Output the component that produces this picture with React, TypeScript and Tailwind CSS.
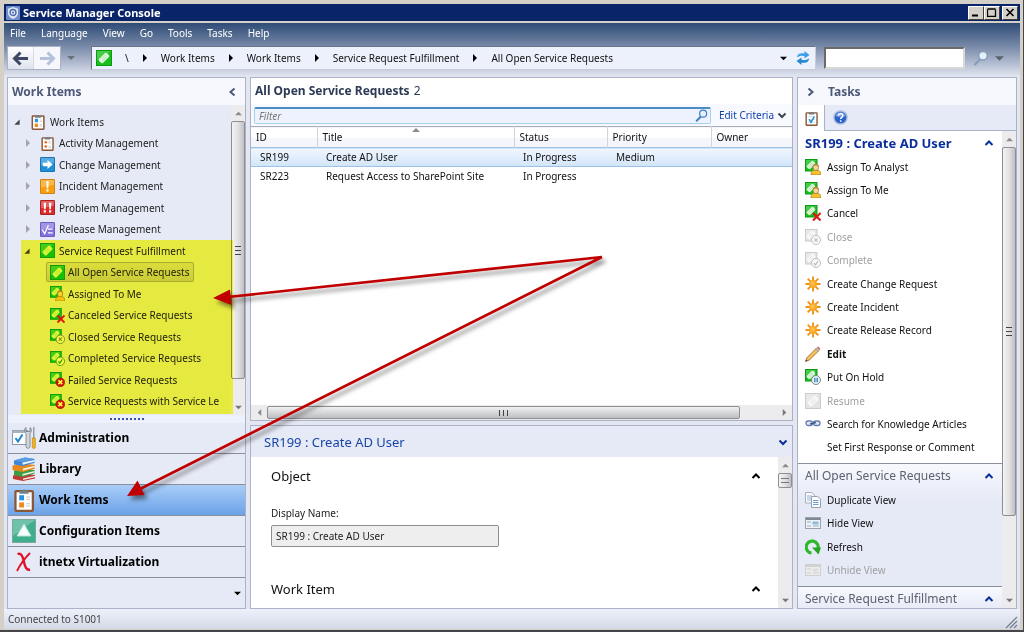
import type { ReactNode } from "react";

type Badge = "user" | "x" | "closed" | "check" | "fail" | "pause";

function RequestIcon({ badge, muted, size = 16 }: { badge?: Badge; muted?: boolean; size?: number }) {
  const fill = muted ? "#e4e4e4" : "#18c01c";
  const edge = muted ? "#cccccc" : "#0d9a12";
  const ring = muted ? "#bdbdbd" : badge === "check" ? "#4f9a44" : "#7b8a80";
  const s = badge ? 11.5 : 15;
  return (
    <svg width={size} height={size} viewBox="0 0 16 16" className="shrink-0" aria-hidden="true">
      <rect x="0.5" y="0.5" width={s} height={s} fill={fill} stroke={edge} />
      <path d={badge ? "M1 1h11L1 9z" : "M1 1h14L1 11z"} fill="#fff" opacity="0.2" />
      <g transform={badge ? "translate(6 6) rotate(-45) scale(.8)" : "translate(8 8) rotate(-45)"}>
        <rect x="-5.5" y="-2.800" width="11" height="5.600" rx="1.600" fill={muted ? "#fafafa" : "#dff7dc"} />
        <path d="M-3-1h6M-3 1h6" stroke={muted ? "#d5d5d5" : "#9fdc9b"} strokeWidth="0.8" />
      </g>
      {badge === "user" && (
        <g>
          <path d="M6 16c0-4 1.500-5 4.700-5s5.200 1 5.200 5z" fill="#f2c230" stroke="#a87a10" strokeWidth="0.7" />
          <ellipse cx="10.800" cy="8.300" rx="2.800" ry="3.300" fill="#f6d6a6" stroke="#a8742a" strokeWidth="0.8" />
          <path d="M7.800 8c0-4.500 6-4.500 6.100 0-2-2-3.500-2-6.100 0z" fill="#b98a34" />
        </g>
      )}
      {badge === "x" && <path d="M8 8l7.500 7.500M15.500 8L8 15.500" stroke="#e01414" strokeWidth="2" />}
      {(badge === "closed" || badge === "check" || badge === "pause") && (
        <circle cx="11" cy="11" r="4.500" fill={badge === "pause" ? "#e6f3fb" : "#fbfbfb"} stroke={ring} />
      )}
      {badge === "closed" && <path d="M9.300 9.300l3.400 3.400M12.700 9.300l-3.400 3.400" stroke={ring} strokeWidth="1.200" />}
      {badge === "check" && <path d="M9 11l1.500 2 2.500-4" stroke={muted ? "#bdbdbd" : "#2a9a2a"} strokeWidth="1.300" fill="none" />}
      {badge === "pause" && <path d="M9.800 8.800v4.400M12.200 8.800v4.400" stroke="#3a86b8" strokeWidth="1.400" />}
      {badge === "fail" && (
        <g>
          <circle cx="11" cy="11" r="4.700" fill="#d8141c" stroke="#9a0c10" strokeWidth="0.6" />
          <path d="M9 9l4 4M13 9l-4 4" stroke="#fff" strokeWidth="1.700" />
        </g>
      )}
    </svg>
  );
}

function ClipboardIcon({ kind = "both", size = 16 }: { kind?: "both" | "orange" | "check"; size?: number }) {
  return (
    <svg width={size} height={size} viewBox="0 0 16 16" className="shrink-0" aria-hidden="true">
      <rect x="2.300" y="2" width="11.600" height="13.200" rx="0.6" fill="#fff" stroke="#8a5634" strokeWidth="1.500" />
      <path d="M5 3.800V1.900h1.800a1.300 1.300 0 0 1 2.500 0H11v1.900z" fill="#757d86" />
      {kind === "both" && (
        <g>
          <rect x="4.800" y="4.800" width="3.200" height="3.400" fill="#2a8fe0" />
          <rect x="4.800" y="9.600" width="3.200" height="3.400" fill="#f08a1c" />
          <path d="M9.500 6h2.500M9.500 7.500h2.500M9.500 10.500h2.500M9.500 12h2.500" stroke="#c4cad2" strokeWidth="0.8" />
        </g>
      )}
      {kind === "orange" && (
        <g>
          <circle cx="6.200" cy="6.600" r="1.400" fill="#ec6a20" />
          <circle cx="6.200" cy="11.200" r="1.400" fill="#ec6a20" />
          <path d="M8.800 6h3M8.800 7.500h3M8.800 11h3M8.800 12.500h3" stroke="#c4cad2" strokeWidth="0.8" />
        </g>
      )}
      {kind === "check" && (
        <g>
          <path d="M4.500 6h7M4.500 9h7M4.500 12h7" stroke="#bcd0e0" strokeWidth="0.8" />
          <path d="M5.500 9l2 3L11 6" stroke="#1f8fd8" strokeWidth="1.600" fill="none" />
        </g>
      )}
    </svg>
  );
}

function TileIcon({ kind }: { kind: "change" | "incident" | "problem" | "release" }) {
  const colors = { change: "#1f8fd6", incident: "#f6a010", problem: "#dc2a2a", release: "#8472dc" };
  const edges = { change: "#0f6cb0", incident: "#cf7c08", problem: "#a81616", release: "#6654c0" };
  return (
    <svg width="15" height="15" viewBox="0 0 16 16" className="shrink-0" aria-hidden="true">
      <rect x="0.500" y="0.500" width="15" height="15" rx="0.500" fill={colors[kind]} stroke={edges[kind]} />
      <path d="M1 1h14v5L1 9z" fill="#fff" opacity="0.25" />
      {kind === "change" && <path d="M3 6.200h5V3.200L13.500 8 8 12.800V9.800H3z" fill="#fff" />}
      {kind === "incident" && <path d="M6.700 2.500h2.600L8.800 10H7.200zM6.900 11.200h2.200v2.200H6.900z" fill="#fff" />}
      {kind === "problem" && <path d="M3.800 2.800h2.800L6 9.800H4.400zM4 11h2.300v2.200H4zM9.400 2.800h2.800L11.600 9.800H10zM9.600 11h2.300v2.200H9.600z" fill="#fff" />}
      {kind === "release" && <path d="M2.500 8.500l2.500 4L9 3.500M8.500 7.500h5M8.500 11.500h5" stroke="#fff" strokeWidth="1.400" fill="none" />}
    </svg>
  );
}

function Chevron({ dir, color }: { dir: "up" | "down" | "left" | "right"; color: string }) {
  const d = {
    up: "M1.500 7L5 3.500 8.500 7",
    down: "M1.500 3.500L5 7l3.500-3.500",
    left: "M7.500 1.500L3.500 5l4 3.500",
    right: "M2.500 1.500l4 3.500-4 3.500",
  };
  return (
    <svg width="10" height="10" viewBox="0 0 10 10" className="shrink-0" aria-hidden="true">
      <path d={d[dir]} fill="none" stroke={color} strokeWidth="2" />
    </svg>
  );
}

function Triangle({ dir, color, size = 8 }: { dir: "up" | "down" | "left" | "right" | "corner"; color: string; size?: number }) {
  const d = {
    up: "M0 6l4-4 4 4z",
    down: "M0 2h8L4 6z",
    left: "M6 0v8L2 4z",
    right: "M2 0l4 4-4 4z",
    corner: "M7.500 0.500v7h-7z",
  };
  return (
    <svg width={size} height={size} viewBox="0 0 8 8" className="shrink-0" aria-hidden="true">
      <path d={d[dir]} fill={color} />
    </svg>
  );
}

function SunIcon() {
  return (
    <svg width="16" height="16" viewBox="0 0 16 16" aria-hidden="true">
      <path d="M8 0.500v15M0.500 8h15M2.700 2.700l10.600 10.600M13.300 2.700L2.700 13.300" stroke="#f0921a" strokeWidth="1.900" />
      <circle cx="8" cy="8" r="4" fill="#f9a825" />
      <circle cx="7.500" cy="7.500" r="2.200" fill="#fdc04a" />
    </svg>
  );
}

function PencilIcon() {
  return (
    <svg width="16" height="16" viewBox="0 0 16 16" aria-hidden="true">
      <path d="M0.500 15.500l1.500-4L11 2.500l2.500 2.500L4.500 14z" fill="#f3bd62" stroke="#9a6a2a" strokeWidth="0.8" />
      <path d="M10.500 3l1.500-1.500L14.500 4 13 5.500z" fill="#b9bcc0" stroke="#888" strokeWidth="0.500" />
      <path d="M12 1.500L13.300.500 15.500 2.700 14.500 4z" fill="#e26a5a" />
      <path d="M0.500 15.500l.800-2 1.300 1.300z" fill="#333" />
    </svg>
  );
}

function LinkIcon() {
  return (
    <svg width="16" height="16" viewBox="0 0 16 16" aria-hidden="true">
      <rect x="1" y="5" width="6.500" height="4.500" rx="2.200" fill="#e4ebf6" stroke="#6580ac" strokeWidth="1.300" />
      <rect x="8.500" y="5" width="6.500" height="4.500" rx="2.200" fill="#e4ebf6" stroke="#6580ac" strokeWidth="1.300" />
      <path d="M5 8l6-1.500" stroke="#405c8c" strokeWidth="1.400" />
    </svg>
  );
}

function CopyIcon() {
  return (
    <svg width="16" height="16" viewBox="0 0 16 16" aria-hidden="true">
      <path d="M.5.500h6L9.500 3v8h-9z" fill="#fbfcff" stroke="#a8aeb8" />
      <path d="M2 4h5M2 6h5M2 8h5" stroke="#8db4dc" />
      <path d="M6.500 4.500h6L15.500 7v8.500h-9z" fill="#fbfcff" stroke="#9aa1ac" />
      <path d="M8 8.500h5.500M8 10.500h5.500M8 12.500h5.500" stroke="#6ba0d6" />
    </svg>
  );
}

function WindowIcon({ muted }: { muted?: boolean }) {
  return (
    <svg width="16" height="16" viewBox="0 0 16 16" aria-hidden="true">
      <rect x="0.500" y="2.500" width="15" height="11" fill={muted ? "#ececec" : "#eef2f6"} stroke={muted ? "#cfcfcf" : "#9aa2ac"} />
      <path d="M1 4h14" stroke={muted ? "#d2d2d2" : "#7d8894"} strokeWidth="2" />
      <path d="M2 7h4M2 11h4M8 11h6" stroke={muted ? "#d8d8d8" : "#b5c6d4"} strokeWidth="1.500" />
      <rect x="7.500" y="6.500" width="6" height="3" fill={muted ? "#dedede" : "#8fb9d8"} />
    </svg>
  );
}

function RefreshIcon() {
  return (
    <svg width="16" height="16" viewBox="0 0 16 16" aria-hidden="true">
      <path d="M6.500 14A6 6 0 1 1 13 9.500" fill="none" stroke="#2fb82c" strokeWidth="3.200" />
      <path d="M7 8.500h9L13.500 15.500z" fill="#23a520" />
    </svg>
  );
}

function SyncIcon() {
  return (
    <svg width="16" height="16" viewBox="0 0 16 16" aria-hidden="true">
      <path d="M2 7.500C2 4 5.500 2.500 9.500 3.500V1l5 4-5 3.500V6.300C7 5.500 5 5.500 2 7.500z" fill="#3ca0e6" />
      <path d="M14 8.500c0 3.500-3.500 5-7.500 4V15l-5-4 5-3.500v2.200c2.500.8 4.500.8 7.500-1.200z" fill="#2488d0" />
    </svg>
  );
}

function Magnifier({ rim, size = 16 }: { rim: string; size?: number }) {
  return (
    <svg width={size} height={size} viewBox="0 0 16 16" className="shrink-0" aria-hidden="true">
      <path d="M1.500 15L7 9.500" stroke={rim} strokeWidth="2.400" />
      <circle cx="10" cy="5.800" r="4.300" fill="#e2f1fc" stroke={rim} strokeWidth="1.500" />
    </svg>
  );
}

function HelpIcon() {
  return (
    <svg width="15" height="15" viewBox="0 0 16 16" aria-hidden="true">
      <circle cx="8" cy="8" r="7" fill="#2c62d0" stroke="#a9bcdc" strokeWidth="1.500" />
      <path d="M2.500 6.500a5.700 5.700 0 0 1 11 0c-3 1.500-8 1.500-11 0z" fill="#fff" opacity="0.350" />
      <path d="M5.700 6.200c0-3 4.800-3 4.800-.2C10.500 7.800 8.200 7.800 8.200 9.600M8.200 10.800v1.700" stroke="#fff" strokeWidth="1.600" fill="none" />
    </svg>
  );
}

function AppIcon() {
  return (
    <svg width="14" height="14" viewBox="0 0 14 14" aria-hidden="true">
      <rect width="14" height="14" rx="1" fill="#6f8cc8" />
      <path d="M7 1l5 1.800v4C12 10 9.500 12 7 13 4.500 12 2 10 2 6.800v-4z" fill="#dfe8f8" />
      <circle cx="7" cy="6.500" r="3" fill="none" stroke="#4a68ac" strokeWidth="1.300" />
      <circle cx="7" cy="6.500" r="1" fill="#4a68ac" />
    </svg>
  );
}

function AdministrationIcon() {
  return (
    <svg width="24" height="24" viewBox="0 0 24 24" aria-hidden="true">
      <rect x="0.500" y="4.500" width="15" height="14" fill="#fff" stroke="#8b98a6" />
      <rect x="0.500" y="4.500" width="15" height="2.500" fill="#aab4c0" />
      <path d="M3.500 12l2.500 3.500L10.500 8.500" stroke="#1f86cc" strokeWidth="2" fill="none" />
      <path d="M14 1.500c-1.500 1-2 4 0 6V20c0 3 4 3 4 0V7.500c2-2 1.500-5 0-6v4h-4z" fill="#d4d8dc" stroke="#6f767e" strokeWidth="0.800" />
      <path d="M21.800 1v11" stroke="#8c9298" strokeWidth="1.300" />
      <path d="M20.300 12h3v9c0 2-3 2-3 0z" fill="#f3b51c" stroke="#b07c08" strokeWidth="0.600" />
    </svg>
  );
}

function LibraryIcon() {
  return (
    <svg width="24" height="24" viewBox="0 0 24 24" aria-hidden="true">
      <path d="M1 18.500l11-2 11 1.500v3.500L11 24 1 22z" fill="#c03a34" />
      <path d="M11 21.500l12-2.700v1.500L11 23z" fill="#f4e6e4" />
      <path d="M2 13.500l10-2 10.500 1.500v3.500L10.500 20 2 18z" fill="#3c9c44" />
      <path d="M10.500 17l12-3v1.500l-12 3.200z" fill="#ecf4ea" />
      <path d="M0.500 8.500l11-2L23 8v3.500L11 15 .5 13z" fill="#e6891c" />
      <path d="M11 11.500l12-2.800v1.500l-12 3.200z" fill="#f7efe0" />
      <path d="M2 3.500l11-3 9.500 1.500v4L10.500 9 2 7.500z" fill="#3f87d6" />
      <path d="M10.500 5.500l12-2.500v1.700l-12 3z" fill="#eef2f8" />
      <path d="M2 3.500l11-3 9.500 1.500-12 3z" fill="#5b9de4" />
    </svg>
  );
}

function ConfigurationIcon() {
  return (
    <svg width="24" height="24" viewBox="0 0 24 24" aria-hidden="true">
      <rect x="0.500" y="0.500" width="23" height="23" fill="#3fae8c" stroke="#7fa89c" />
      <path d="M1 1h22L1 17z" fill="#fff" opacity="0.250" />
      <path d="M12 5l7 12H5z" fill="#f7fffc" stroke="#b8e2d4" />
    </svg>
  );
}

function VirtualizationIcon() {
  return (
    <svg width="24" height="24" viewBox="0 0 24 24" aria-hidden="true">
      <path d="M5.500 4c4-1.500 5.500 3 6.500 8s2.500 8.500 6 7.500" fill="none" stroke="#e0142c" strokeWidth="2.400" />
      <path d="M18 3C13 8 8.500 14 5 21" fill="none" stroke="#e0142c" strokeWidth="1.800" />
    </svg>
  );
}

function VScroll({ thumb, grip }: { thumb: string; grip?: "lines" | "box" }) {
  return (
    <div className="flex w-[14px] shrink-0 flex-col items-center bg-[#ececee]" aria-hidden="true">
      <div className="flex h-4 items-center"><Triangle dir="up" color="#8a8a8a" size={7} /></div>
      <div className="flex min-h-0 w-full flex-1 flex-col">
        <div className={`flex flex-col items-center justify-center gap-px rounded-xs border border-[#8f8f92] bg-linear-to-r from-[#f3f3f3] via-[#e2e2e4] to-[#bfc0c4] ${thumb}`}>
          {grip === "box" ? (
            <><i className="h-px w-2 bg-[#777]" /><i className="h-px w-2" /><i className="h-px w-2 bg-[#777]" /></>
          ) : (
            <><i className="h-px w-1.5 bg-[#444]" /><i className="h-px w-1.5" /><i className="h-px w-1.5 bg-[#444]" /><i className="h-px w-1.5" /><i className="h-px w-1.5 bg-[#444]" /></>
          )}
        </div>
      </div>
      <div className="flex h-4 items-center"><Triangle dir="down" color="#777" size={7} /></div>
    </div>
  );
}

const menus = ["File", "Language", "View", "Go", "Tools", "Tasks", "Help"];
const crumbs = ["Work Items", "Work Items", "Service Request Fulfillment", "All Open Service Requests"];

const tree: { label: string; icon: ReactNode; level: 0 | 1 | 2; open?: boolean; selected?: boolean }[] = [
  { label: "Work Items", icon: <ClipboardIcon />, level: 0, open: true },
  { label: "Activity Management", icon: <ClipboardIcon kind="orange" size={15} />, level: 1 },
  { label: "Change Management", icon: <TileIcon kind="change" />, level: 1 },
  { label: "Incident Management", icon: <TileIcon kind="incident" />, level: 1 },
  { label: "Problem Management", icon: <TileIcon kind="problem" />, level: 1 },
  { label: "Release Management", icon: <TileIcon kind="release" />, level: 1 },
  { label: "Service Request Fulfillment", icon: <RequestIcon size={15} />, level: 1, open: true },
  { label: "All Open Service Requests", icon: <RequestIcon size={15} />, level: 2, selected: true },
  { label: "Assigned To Me", icon: <RequestIcon badge="user" size={15} />, level: 2 },
  { label: "Canceled Service Requests", icon: <RequestIcon badge="x" size={15} />, level: 2 },
  { label: "Closed Service Requests", icon: <RequestIcon badge="closed" size={15} />, level: 2 },
  { label: "Completed Service Requests", icon: <RequestIcon badge="check" size={15} />, level: 2 },
  { label: "Failed Service Requests", icon: <RequestIcon badge="fail" size={15} />, level: 2 },
  { label: "Service Requests with Service Le", icon: <RequestIcon badge="fail" size={15} />, level: 2 },
];
const indent = ["pl-1.5", "pl-4", "pl-[38px]"];

const workspaces: { label: string; icon: ReactNode; active?: boolean }[] = [
  { label: "Administration", icon: <AdministrationIcon /> },
  { label: "Library", icon: <LibraryIcon /> },
  { label: "Work Items", icon: <ClipboardIcon size={24} />, active: true },
  { label: "Configuration Items", icon: <ConfigurationIcon /> },
  { label: "itnetx Virtualization", icon: <VirtualizationIcon /> },
];

type Task = { label: string; icon?: ReactNode; disabled?: boolean; bold?: boolean };
const requestTasks: Task[] = [
  { label: "Assign To Analyst", icon: <RequestIcon badge="user" /> },
  { label: "Assign To Me", icon: <RequestIcon badge="user" /> },
  { label: "Cancel", icon: <RequestIcon badge="x" /> },
  { label: "Close", icon: <RequestIcon badge="closed" muted />, disabled: true },
  { label: "Complete", icon: <RequestIcon badge="check" muted />, disabled: true },
  { label: "Create Change Request", icon: <SunIcon /> },
  { label: "Create Incident", icon: <SunIcon /> },
  { label: "Create Release Record", icon: <SunIcon /> },
  { label: "Edit", icon: <PencilIcon />, bold: true },
  { label: "Put On Hold", icon: <RequestIcon badge="pause" /> },
  { label: "Resume", icon: <RequestIcon muted />, disabled: true },
  { label: "Search for Knowledge Articles", icon: <LinkIcon /> },
  { label: "Set First Response or Comment" },
];
const viewTasks: Task[] = [
  { label: "Duplicate View", icon: <CopyIcon /> },
  { label: "Hide View", icon: <WindowIcon /> },
  { label: "Refresh", icon: <RefreshIcon /> },
  { label: "Unhide View", icon: <WindowIcon muted />, disabled: true },
];

const rows = [
  { id: "SR199", title: "Create AD User", status: "In Progress", priority: "Medium", selected: true },
  { id: "SR223", title: "Request Access to SharePoint Site", status: "In Progress", priority: "" },
];

function TaskList({ items, className }: { items: Task[]; className: string }) {
  return (
    <ul className={`grid auto-rows-fr ${className}`}>
      {items.map((t) => (
        <li key={t.label} className="flex">
          <button
            disabled={t.disabled}
            className={`flex flex-1 items-center gap-1.5 pl-[7px] text-left whitespace-nowrap disabled:text-[#a0a0a0] ${t.bold ? "font-bold" : ""}`}
          >
            <span className="h-4 w-4 shrink-0">{t.icon}</span>
            {t.label}
          </button>
        </li>
      ))}
    </ul>
  );
}

function TaskHeading({ children, primary }: { children: ReactNode; primary?: boolean }) {
  return (
    <h3 className={`flex h-6 items-center justify-between pr-2 pl-[7px] whitespace-nowrap ${primary ? "text-[13px] font-bold text-[#0a2f9c]" : "text-xs text-[#5c626e]"}`}>
      {children}
      <button aria-label="Collapse"><Chevron dir="up" color="#0a2f9c" /></button>
    </h3>
  );
}

function TitleBar() {
  const button = "flex h-3.5 w-4 items-center justify-center border border-t-white border-r-[#404040] border-b-[#404040] border-l-white bg-[#d4d0c8]";
  return (
    <header className="flex h-[17px] shrink-0 items-center gap-[3px] bg-[#0a246a] px-0.5 text-white">
      <AppIcon />
      <h1 className="flex-1 text-[11px] font-bold">Service Manager Console</h1>
      <div className="flex">
        <button className={button} aria-label="Minimize">
          <svg width="10" height="9" viewBox="0 0 10 9"><path d="M1 7.500h6" stroke="#000" strokeWidth="2" /></svg>
        </button>
        <button className={button} aria-label="Maximize">
          <svg width="10" height="9" viewBox="0 0 10 9"><path d="M.5 1.500v7h8v-7M.5 1h8" fill="none" stroke="#000" strokeWidth="1.300" /></svg>
        </button>
        <button className={`ml-0.5 ${button}`} aria-label="Close">
          <svg width="10" height="9" viewBox="0 0 10 9"><path d="M1.500 1l7 7M8.500 1l-7 7" stroke="#000" strokeWidth="1.600" /></svg>
        </button>
      </div>
    </header>
  );
}

function Toolbar() {
  return (
    <div className="flex h-[30px] shrink-0 items-center pr-4 pl-[3px]">
      <div className="flex h-6 border border-[#aab1c2] bg-[#f5f7fd]">
        <button aria-label="Back" className="flex w-[26px] items-center justify-center border-r border-[#d6dae6] bg-linear-to-b from-white to-[#dfe3ee]">
          <svg width="17" height="15" viewBox="0 0 17 15"><path d="M16 7.500H3M8.500 1.500l-6 6 6 6" fill="none" stroke="#3d4964" strokeWidth="3" /></svg>
        </button>
        <button aria-label="Forward" className="flex w-[26px] items-center justify-center">
          <svg width="17" height="15" viewBox="0 0 17 15"><path d="M1 7.500h13M8.500 1.500l6 6-6 6" fill="none" stroke="#b3c2da" strokeWidth="3" /></svg>
        </button>
      </div>
      <button aria-label="History" className="mr-4 ml-1.5"><Triangle dir="down" color="#6a6f7c" /></button>
      <nav aria-label="Location" className="flex h-6 min-w-0 flex-1 items-center border border-t-[#6c7385] border-r-[#c8ccd8] border-b-[#c8ccd8] border-l-[#6c7385] bg-[#edf1fc] px-1 whitespace-nowrap text-[#111]">
        <RequestIcon />
        <span className="ml-[13px]">\</span>
        {crumbs.map((c, i) => (
          <span key={i} className="flex items-center">
            <span className="mx-3"><Triangle dir="right" color="#000" size={8} /></span>
            <a href="#view">{c}</a>
          </span>
        ))}
        <button aria-label="Recent locations" className="mr-2 ml-auto"><Triangle dir="down" color="#000" size={7} /></button>
        <button aria-label="Reload"><SyncIcon /></button>
      </nav>
      <input aria-label="Search" className="ml-2 h-[22px] w-[141px] border-2 border-t-[#6a6a6a] border-r-[#d8d8d4] border-b-[#d8d8d4] border-l-[#6a6a6a] bg-white px-1" />
      <button aria-label="Run search" className="ml-2"><Magnifier rim="#8a9db8" /></button>
      <button aria-label="Search options" className="ml-1.5"><Triangle dir="down" color="#5b616e" size={9} /></button>
    </div>
  );
}

function NavigationPane() {
  return (
    <aside className="flex w-[239px] shrink-0 flex-col border border-[#aab2c8] bg-[#e6eaf6]">
      <div className="flex h-[27px] shrink-0 items-center justify-between bg-[#f7f8fe] pr-2 pl-1 text-[#4d5a77]">
        <h2 className="text-xs font-bold">Work Items</h2>
        <button aria-label="Collapse pane"><Chevron dir="left" color="#4d5a77" /></button>
      </div>
      <div className="flex min-h-0 flex-1">
        <ul className="mt-1.5 grid h-[301px] min-w-0 flex-1 auto-rows-fr text-[#222]">
          {tree.map((n) => (
            <li key={n.label} className={`flex min-w-0 items-center ${indent[n.level]}`}>
              {n.level < 2 && (
                <span className="mr-2 flex w-2 shrink-0"><Triangle dir={n.open ? "corner" : "right"} color={n.open ? "#444" : "#a2a4aa"} size={n.open ? 6 : 8} /></span>
              )}
              <button
                className={`flex items-center whitespace-nowrap ${n.level === 2 ? "h-5 gap-[3px] border px-[3px]" : "gap-1"} ${n.selected ? "rounded-xs border-[#a9acb4] bg-linear-to-b from-[#dcdde2] to-[#c9ccd4]" : "border-transparent"}`}
              >
                {n.icon}
                {n.label}
              </button>
            </li>
          ))}
        </ul>
        <VScroll thumb="h-[258px]" />
      </div>
      <div className="flex h-2 shrink-0 items-center justify-center gap-0.5 bg-[#edf1fc]" aria-hidden="true">
        {Array.from({ length: 9 }, (_, i) => <i key={i} className="h-0.5 w-0.5 bg-[#3a4fa0]" />)}
      </div>
      <nav aria-label="Workspaces">
        {workspaces.map((w) => (
          <button
            key={w.label}
            className={`flex h-[31px] w-full items-center gap-[3px] border-b border-[#8a8f9c] pl-1 text-xs font-bold text-black ${w.active ? "bg-linear-to-b from-[#a9cdf8] to-[#6ba2e8]" : ""}`}
          >
            {w.icon}
            {w.label}
          </button>
        ))}
      </nav>
      <div className="flex h-[30px] shrink-0 items-center justify-end pr-1">
        <button aria-label="Configure buttons"><Triangle dir="down" color="#000" size={7} /></button>
      </div>
    </aside>
  );
}

function ResultsPanel() {
  const th = "relative h-[21px] border-r border-[#d3d4d8] pl-[5px] text-left font-normal";
  return (
    <section className="flex min-h-0 flex-1 flex-col border border-[#aab2c8] bg-white">
      <h2 className="flex h-[26px] shrink-0 items-center gap-1 pl-1 text-xs text-[#2c3a55]"><b>All Open Service Requests</b> 2</h2>
      <div className="flex h-[22px] shrink-0 items-center bg-[#f8f9fe] pr-[5px] pl-[3px]">
        <div className="flex h-[17px] flex-1 items-center rounded-xs border border-t-2 border-[#a6d2ee] border-t-[#4a8cc4] bg-[#eef2fe] pr-0.5">
          <input aria-label="Filter" placeholder="Filter" className="h-full min-w-0 flex-1 bg-transparent px-1 outline-none placeholder:text-[#777] placeholder:italic" />
          <Magnifier rim="#3f7fc0" size={13} />
        </div>
        <button className="ml-2 flex items-center gap-[3px] text-[#0f3fae]">Edit Criteria <Chevron dir="down" color="#3f4654" /></button>
      </div>
      <div className="min-h-0 flex-1 overflow-hidden">
        <table className="w-full table-fixed border-collapse whitespace-nowrap text-[#111]">
          <colgroup>
            <col className="w-[66px]" /><col className="w-[197px]" /><col className="w-[93px]" /><col className="w-[104px]" /><col />
          </colgroup>
          <thead className="border-t border-[#a9acb6] bg-linear-to-b from-white from-50% to-[#f5f6fc] to-50%">
            <tr>
              <th className={th}>ID</th>
              <th className={th}>
                Title
                <span className="absolute inset-x-0 -top-px flex justify-center"><Triangle dir="up" color="#8b8d92" /></span>
              </th>
              <th className={th}>Status</th>
              <th className={th}>Priority</th>
              <th className={`${th} border-r-0`}>Owner</th>
            </tr>
          </thead>
          <tbody>
            {rows.map((r) => (
              <tr key={r.id} className={r.selected ? "border-y border-[#9cc2e6] bg-linear-to-b from-[#f0f6fe] to-[#d3e5fa]" : ""}>
                <td className="h-[19px] pl-[9px]">{r.id}</td>
                <td className="pl-[9px]">{r.title}</td>
                <td className="pl-[9px]">{r.status}</td>
                <td className="pl-[9px]">{r.priority}</td>
                <td />
              </tr>
            ))}
          </tbody>
        </table>
      </div>
      <div className="flex h-[15px] shrink-0 items-center bg-[#ececee]" aria-hidden="true">
        <span className="flex w-4 justify-center"><Triangle dir="left" color="#8a8a8a" size={7} /></span>
        <div className="flex flex-1">
          <div className="flex h-[13px] w-[93%] items-center justify-center gap-px rounded-xs border border-[#8f8f92] bg-linear-to-b from-[#f1f1f2] to-[#bcbec2]">
            <i className="h-1.5 w-px bg-[#444]" /><i className="h-1.5 w-px" /><i className="h-1.5 w-px bg-[#444]" /><i className="h-1.5 w-px" /><i className="h-1.5 w-px bg-[#444]" />
          </div>
        </div>
        <span className="flex w-4 justify-center"><Triangle dir="right" color="#777" size={7} /></span>
      </div>
    </section>
  );
}

function DetailPanel() {
  return (
    <section className="flex h-[184px] shrink-0 flex-col border border-[#aab2c8] bg-white">
      <h2 className="flex h-[31px] shrink-0 items-center justify-between bg-[#e6eaf6] pr-1 pl-[13px] text-[13px] text-[#1846a8]">
        SR199 : Create AD User
        <button aria-label="Toggle details"><Chevron dir="down" color="#0a2f9c" /></button>
      </h2>
      <div className="flex min-h-0 flex-1">
        <div className="flex flex-1 flex-col pt-[9px] pr-[17px] pl-5">
          <h3 className="flex h-5 items-center justify-between text-[13px] text-[#111]">Object <button aria-label="Collapse Object"><Chevron dir="up" color="#000" /></button></h3>
          <label htmlFor="display-name" className="mt-[19px] h-4 leading-4 text-[#222]">Display Name:</label>
          <input id="display-name" readOnly value="SR199 : Create AD User" className="mt-1 h-[22px] w-[228px] rounded-xs border border-[#8e8f94] bg-[#eeeeee] px-1 text-[#222]" />
          <h3 className="mt-8 flex h-5 items-center justify-between text-[13px] text-[#111]">Work Item <button aria-label="Collapse Work Item"><Chevron dir="up" color="#000" /></button></h3>
        </div>
        <VScroll thumb="h-[15px]" grip="box" />
      </div>
    </section>
  );
}

function TasksPane() {
  return (
    <aside className="flex w-[220px] shrink-0 flex-col border border-[#aab2c8] bg-white">
      <div className="flex h-[27px] shrink-0 items-center gap-3 bg-[#f7f8fe] pl-2 text-[#4d5a77]">
        <button aria-label="Collapse pane"><Chevron dir="right" color="#4d5a77" /></button>
        <h2 className="text-xs font-bold">Tasks</h2>
      </div>
      <div className="flex h-[26px] shrink-0 bg-[#e6eaf6]">
        <button aria-label="Tasks" className="flex w-[27px] items-center justify-center border-r border-[#aab2c8] bg-white"><ClipboardIcon kind="check" size={15} /></button>
        <button aria-label="Help" className="flex flex-1 items-center border-b border-[#aab2c8] pl-2"><HelpIcon /></button>
      </div>
      <div className="flex min-h-0 flex-1">
        <div className="min-w-0 flex-1 overflow-hidden text-[#111]">
          <TaskHeading primary>SR199 : Create AD User</TaskHeading>
          <TaskList items={requestTasks} className="h-[304px]" />
          <section className="mt-1 border-t border-[#8a8f9c] bg-linear-to-b from-[#f8f9fe] to-[#e6eaf6] to-30% pb-1">
            <TaskHeading>All Open Service Requests</TaskHeading>
            <TaskList items={viewTasks} className="h-[94px]" />
          </section>
          <section className="border-t border-[#8a8f9c] bg-linear-to-b from-[#f8f9fe] to-[#e6eaf6]">
            <TaskHeading>Service Request Fulfillment</TaskHeading>
          </section>
        </div>
        <VScroll thumb="h-[369px]" />
      </div>
    </aside>
  );
}

function Annotations() {
  return (
    <div className="pointer-events-none absolute inset-0" aria-hidden="true">
      <div className="absolute top-[240px] left-[21px] h-[174px] w-[212px] bg-[#ffff42] mix-blend-multiply" />
      <svg className="absolute top-0 left-0 overflow-visible drop-shadow-[3px_4px_2px_rgba(0,0,0,0.45)]" width="620" height="510" viewBox="0 0 620 510">
        <path d="M602 257L228 297M602 257L138 490" stroke="#c00000" strokeWidth="2.600" fill="none" />
        <path d="M213 298l17-8.500 1.500 15.500zM127 496l10.500-15.500 7 14.500z" fill="#c00000" />
      </svg>
    </div>
  );
}

export default function App() {
  return (
    <div className="relative flex h-screen min-h-[632px] flex-col border-r border-b-2 border-[#44464c] bg-[#d4d0c8] pt-1 pr-[3px] pb-px pl-1 font-['Noto_Sans',sans-serif] text-[10px] leading-4">
      <TitleBar />
      <div className="mt-0.5 flex min-h-0 flex-1 flex-col bg-[#e4e7f2]">
        <div className="flex h-[54px] shrink-0 flex-col bg-linear-to-b from-[#2f4b76] via-[#8494b0] via-50% to-[#e4e7f2]">
          <nav aria-label="Menu" className="flex h-5 items-center gap-[15px] pl-1.5 text-white">
            {menus.map((m) => <button key={m}>{m}</button>)}
          </nav>
          <Toolbar />
        </div>
        <main className="flex min-h-0 flex-1 gap-1 px-[3px]">
          <NavigationPane />
          <div className="flex min-w-0 flex-1 flex-col gap-1">
            <ResultsPanel />
            <DetailPanel />
          </div>
          <TasksPane />
        </main>
        <footer className="flex h-5 shrink-0 items-center justify-between bg-linear-to-b from-[#eef1fa] to-[#d3d9e6] pr-0.5 pl-1 text-[#444]">
          Connected to S1001
          <svg width="13" height="13" viewBox="0 0 13 13" className="self-end" aria-hidden="true">
            <path d="M1 12L12 1M5 12l7-7M9 12l3-3" stroke="#7a7f8a" strokeWidth="1.300" />
          </svg>
        </footer>
      </div>
      <Annotations />
    </div>
  );
}
